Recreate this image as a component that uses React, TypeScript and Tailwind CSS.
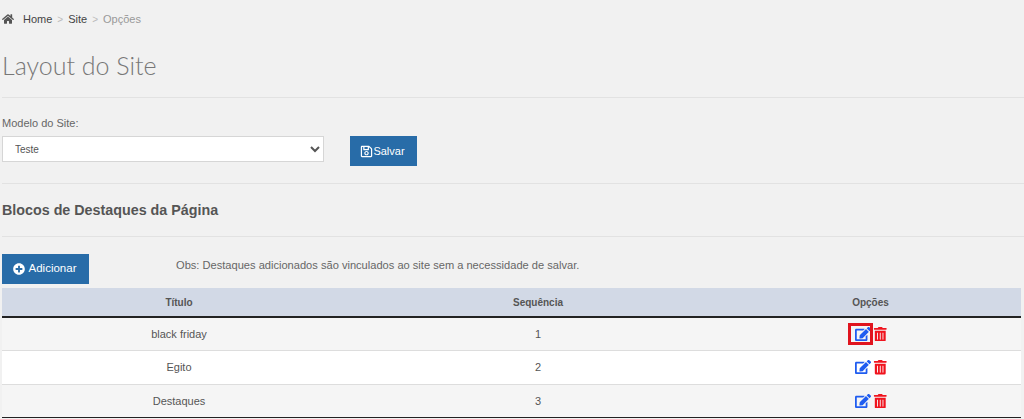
import { FaEdit, FaHome, FaPlusCircle, FaRegSave, FaTrashAlt } from "react-icons/fa";

const ROWS = [
  { title: "black friday", seq: 1, bg: "bg-[#f5f5f5]", marked: true },
  { title: "Egito", seq: 2, bg: "bg-white", marked: false },
  { title: "Destaques", seq: 3, bg: "bg-[#f5f5f5]", marked: false },
];

export default function App() {
  return (
    <div className="h-[419px] overflow-hidden bg-[#f1f1f1] pl-[2px] font-['Liberation_Sans',Arial,sans-serif] text-[11px] text-[#555]">
      {/* Breadcrumb */}
      <div className="flex h-[38px] items-center text-[#444]">
        <FaHome className="text-[12px] text-[#555]" />
        <span className="ml-[9px]">Home</span>
        <span className="mx-[5px] text-[10px] font-light text-[#bbb]">&gt;</span>
        <span>Site</span>
        <span className="mx-[5px] text-[10px] font-light text-[#bbb]">&gt;</span>
        <span className="text-[#999]">Opções</span>
      </div>

      <h1 className="font-['Lato',sans-serif] text-[25px] leading-[54px] font-light text-[#777]">Layout do Site</h1>
      <hr className="mt-[5px] border-t border-[#e2e2e2]" />

      {/* Modelo */}
      <div className="mt-[18px] leading-[14px] text-[#666]">Modelo do Site:</div>
      <div className="mt-[6px] flex items-start">
        <select className="h-[26px] w-[322px] border border-[#d6d6d6] bg-white pl-[8px] text-[10px] text-[#555]" defaultValue="Teste">
          <option>Teste</option>
        </select>
        <button className="ml-[26px] flex h-[30px] w-[67px] items-center justify-center bg-[#286ca8] pr-[2px] text-[11px] text-white">
          <FaRegSave className="text-[13px]" />
          <span>Salvar</span>
        </button>
      </div>
      <hr className="mt-[17px] border-t border-[#e2e2e2]" />

      <h2 className="mt-[17px] text-[14.3px] leading-[18px] font-bold text-[#555]">Blocos de Destaques da Página</h2>
      <hr className="mt-[17px] border-t border-[#e2e2e2]" />

      {/* Adicionar */}
      <div className="mt-[17px] flex items-start">
        <button className="flex h-[30px] w-[87px] items-center justify-center gap-[4px] bg-[#286ca8] pr-[2px] text-[11.5px] text-white">
          <FaPlusCircle className="text-[12px]" />
          <span>Adicionar</span>
        </button>
        <span className="mt-[4px] ml-[87px] text-[11.1px] leading-[14px] text-[#666]">
          Obs: Destaques adicionados são vinculados ao site sem a necessidade de salvar.
        </span>
      </div>

      <table className="mt-[4px] w-[1019px] table-fixed border-collapse text-center text-[11px]">
        <thead>
          <tr className="h-[29px] border-b-2 border-[#222] bg-[#d2d9e6] text-[10px] text-[#555]">
            <th className="w-[354px] font-bold">Título</th>
            <th className="w-[364px] font-bold">Sequência</th>
            <th className="font-bold">Opções</th>
          </tr>
        </thead>
        <tbody>
          {ROWS.map((row) => (
            <tr key={row.title} className={`h-[33.5px] border-b border-[#ddd] last:border-[#222] ${row.bg}`}>
              <td>{row.title}</td>
              <td>{row.seq}</td>
              <td>
                <div className="ml-[2px] flex items-center justify-center gap-[2px]">
                  <span className="relative">
                    <FaEdit className="text-[16px] text-[#1f5cf0]" />
                    {/* red annotation box on the first row */}
                    {row.marked && <span className="absolute -top-[3px] -right-[2px] -bottom-[3px] -left-[7px] border-[3px] border-[#e0141e]" />}
                  </span>
                  <FaTrashAlt className="text-[14.5px] text-[#f0141e]" />
                </div>
              </td>
            </tr>
          ))}
        </tbody>
      </table>
    </div>
  );
}
